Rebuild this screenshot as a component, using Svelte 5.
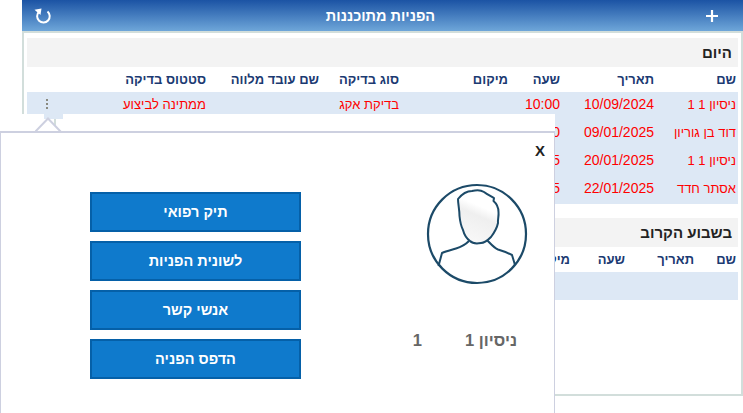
<script>
  const today = [
    { name: 'ניסיון 1 1', date: '10/09/2024', time: '10:00', type: 'בדיקת אקג', status: 'ממתינה לביצוע', menu: true },
    { name: 'דוד בן גוריון', date: '09/01/2025', time: '11:00' },
    { name: 'ניסיון 1 1', date: '20/01/2025', time: '12:15' },
    { name: 'אסתר חדד', date: '22/01/2025', time: '13:45' }
  ];
  const buttons = ['תיק רפואי', 'לשונית הפניות', 'אנשי קשר', 'הדפס הפניה'];
</script>

<div class="panel" dir="rtl">
  <header class="bar">
    <svg class="plus" width="16" height="16" viewBox="0 0 16 16"><path d="M8 2v12M2 8h12" stroke="#fff" stroke-width="2.2" fill="none"/></svg>
    <h1>הפניות מתוכננות</h1>
    <svg class="refresh" width="18" height="18" viewBox="0 0 18 18"><path d="M14.500 4.500A6.300 6.300 0 1 1 6 4.800" stroke="#fff" stroke-width="2" fill="none"/><path d="M1.500 2.800L8.500 1.500L7.500 8z" fill="#fff"/></svg>
  </header>
  <div class="content">
    <h2>היום</h2>
    <table class="t1">
      <colgroup><col class="a1"><col class="a2"><col class="a3"><col class="a4"><col class="a5"><col class="a6"><col class="a7"><col></colgroup>
      <thead><tr><th>שם</th><th>תאריך</th><th>שעה</th><th>מיקום</th><th>סוג בדיקה</th><th>שם עובד מלווה</th><th>סטטוס בדיקה</th><th></th></tr></thead>
      <tbody>
        {#each today as r}
          <tr>
            <td class="he">{r.name}</td><td>{r.date}</td><td>{r.time}</td><td></td><td class="he">{r.type ?? ''}</td><td></td><td class="he">{r.status ?? ''}</td>
            <td class="dots">{#if r.menu}<span></span><span></span><span></span>{/if}</td>
          </tr>
        {/each}
      </tbody>
    </table>
    <h2 class="second">בשבוע הקרוב</h2>
    <table class="t2">
      <colgroup><col class="b1"><col class="b2"><col class="b3"><col></colgroup>
      <thead><tr><th>שם</th><th>תאריך</th><th>שעה</th><th>מיקום</th></tr></thead>
      <tbody><tr><td></td><td></td><td></td><td></td></tr></tbody>
    </table>
  </div>
</div>

<div class="overlay" dir="rtl">
  <div class="tab"></div>
  <div class="tab-line"></div>
  <svg class="arrow" width="30" height="15" viewBox="0 0 30 15"><path d="M0 15L13 1.500 26 15" fill="#fff" stroke="#cdd0e0" stroke-width="2"/></svg>
  <div class="popup">
    <button class="close">X</button>
    <div class="person">
      <svg width="102" height="102" viewBox="0 0 102 102">
        <defs><linearGradient id="face" x1="0.7" y1="0.1" x2="0.4" y2="1"><stop offset="0.25" stop-color="#fff"/><stop offset="0.45" stop-color="#efefef"/><stop offset="1" stop-color="#f8f8f8"/></linearGradient></defs>
        <circle cx="51" cy="51" r="49" fill="#fff" stroke="#1c4a68" stroke-width="2.200"/>
        <path d="M32 16C36 11 41 8 46 8C50 7 55 7 58 9C62 12 65 13 68 15L67.500 18C71 21 72.500 25 72.500 29C73 33 71.500 37 72 40C71 45 68 50 65 54C62 57 59 60 55 60C50 61 46 60 44 58C40 55 38 51 37 47C35 43 34 38 33.500 33C33.500 27 32 21 32 16Z" fill="url(#face)" stroke="#1c4a68" stroke-width="2" stroke-linejoin="round"/>
        <path d="M43 58C39 62 35 64 30 65.500C25 67 20 68 16 70L12.500 83M61 57C65 61 68 65 72 66.500C77 68 82 70 86 72L89 82" fill="none" stroke="#1c4a68" stroke-width="2" stroke-linejoin="round"/>
      </svg>
      <div class="pname"><span>ניסיון 1</span><span>1</span></div>
    </div>
    <div class="actions">
      {#each buttons as b}<button class="action">{b}</button>{/each}
    </div>
  </div>
</div>

<style>
  :global(body) { margin: 0; background: #fff; font-family: "Liberation Sans", Arial, sans-serif; overflow: hidden; }
  :global(html) { overflow: hidden; }
  .panel { margin-left: 22px; height: 396px; display: flex; flex-direction: column; box-sizing: border-box; }
  .bar { height: 31px; flex: none; display: flex; align-items: center; justify-content: space-between; padding: 0 23px 0 11px; background: linear-gradient(#1b53a4, #6ea6d9); color: #fff; }
  .bar h1 { margin: 0 0 0 6px; font-size: 14.5px; font-weight: bold; }
  .content { flex: 1; border: 2px solid #d2dedb; border-top-width: 2px; padding: 5px 3px 0 3px; background: #fff; }
  h2 { margin: 0; height: 29px; background: #f3f3f3; font-size: 15px; line-height: 29px; font-weight: bold; color: #222; padding-right: 6px; }
  h2.second { margin-top: 14px; }
  table { width: 100%; border-collapse: collapse; table-layout: fixed; }
  col.a1 { width: 82px; } col.a2 { width: 94px; } col.a3 { width: 52px; } col.a4 { width: 109px; }
  col.a5 { width: 80px; } col.a6 { width: 113px; } col.a7 { width: 143px; }
  col.b1 { width: 42px; } col.b2 { width: 69px; } col.b3 { width: 55px; }
  th { height: 25px; padding: 0 2px; text-align: right; color: #1b3a72; font-size: 13px; font-weight: bold; }
  td { height: 28px; padding: 0 2px 4px; box-sizing: border-box; text-align: right; color: #f00; font-size: 14px; white-space: nowrap; background: #dde8f5; }
  td.he { font-size: 13px; }
  .dots { text-align: center; line-height: 0; padding: 1px 0 4px 2px; }
  .dots span { display: block; width: 2px; height: 2px; margin: 0 auto 2px; background: #8a8a80; }
  .overlay { position: absolute; left: 0; top: 114px; width: 555px; height: 299px; background: #fff; }
  .tab { position: absolute; left: 44px; top: 0; width: 19px; height: 5px; background: #dde8f5; }
  .tab-line { position: absolute; left: 54px; top: 5px; width: 2px; height: 12px; background: #d2dedb; }
  .arrow { position: absolute; left: 35px; top: 3px; }
  .popup { position: absolute; left: 0; right: 0; top: 17px; bottom: 0; border: 1px solid #cdd0e0; border-top-width: 2px; border-bottom: 0; box-sizing: border-box; display: flex; padding: 50px 26px 0 0; gap: 125px; }
  .close { position: absolute; right: 9px; top: 9px; background: none; border: 0; padding: 0; font: bold 15px "Liberation Sans", sans-serif; color: #222; }
  .person { width: 102px; display: flex; flex-direction: column; }
  .pname { display: flex; gap: 43px; margin-top: 46px; padding-right: 11px; font-size: 16.500px; font-weight: bold; color: #666; white-space: nowrap; }
  .actions { display: flex; flex-direction: column; gap: 9px; margin-top: 9px; }
  .action { width: 211px; height: 40px; flex: none; background: #0f7acc; border: 2px solid #0560a8; color: #fff; font: bold 14.500px "Liberation Sans", sans-serif; padding: 0; }
</style>
